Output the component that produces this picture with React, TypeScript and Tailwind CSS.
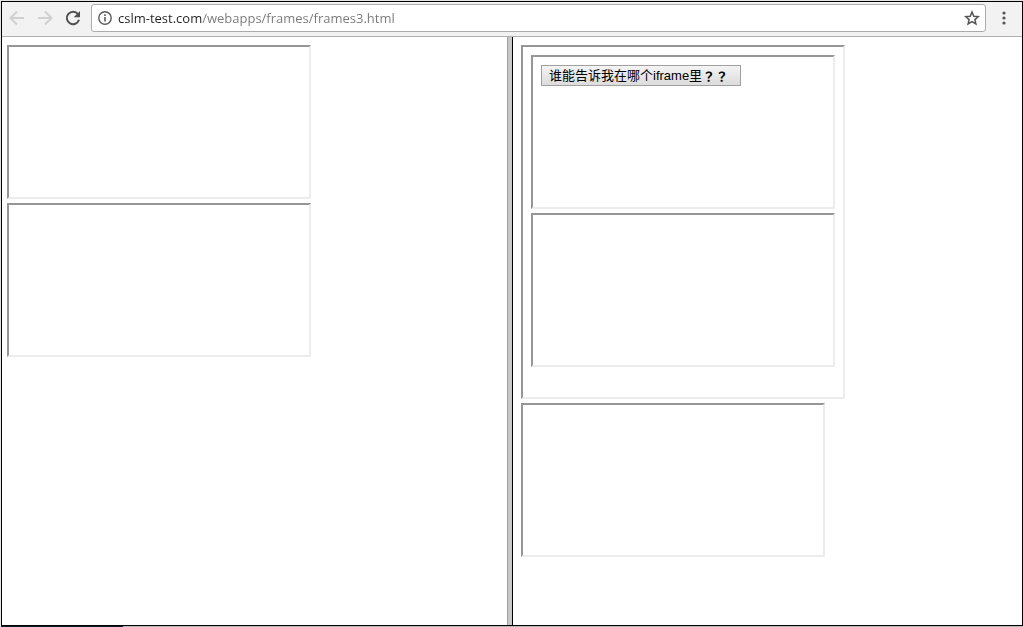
import type { ReactNode } from "react";

function Frame({ label, className = "", children }: { label: string; className?: string; children?: ReactNode }) {
  return (
    <section
      aria-label={label}
      className={`border-2 border-t-[#969696] border-l-[#969696] border-r-[#ececec] border-b-[#ececec] bg-white p-2 ${className}`}
    >
      {children}
    </section>
  );
}

function Toolbar() {
  return (
    <header className="flex h-[35px] shrink-0 items-start border-b border-[#b0b0b0] bg-[#f2f2f2] pt-0.5 pr-2.5 pl-[3px]">
      <nav className="flex h-7 items-center gap-1">
        <button type="button" aria-label="Back" disabled className="flex size-6 items-center justify-center">
          <svg viewBox="0 0 16 16" className="size-4" fill="none" stroke="#d0d0d0" strokeWidth="2">
            <path d="M15 8H2M8 1.5L1.5 8L8 14.5" />
          </svg>
        </button>
        <button type="button" aria-label="Forward" disabled className="flex size-6 items-center justify-center">
          <svg viewBox="0 0 16 16" className="size-4" fill="none" stroke="#d0d0d0" strokeWidth="2">
            <path d="M1 8H14M8 1.5L14.5 8L8 14.5" />
          </svg>
        </button>
        <button type="button" aria-label="Reload" className="flex size-6 items-center justify-center">
          <svg viewBox="0 0 16 16" className="size-4" fill="none">
            <path d="M13 4.2A6.2 6.2 0 1 0 14 9.8" stroke="#505050" strokeWidth="2" />
            <path d="M15 1V7.3H8.7Z" fill="#505050" />
          </svg>
        </button>
      </nav>
      <form
        className="ml-1.5 flex h-7 min-w-0 flex-1 items-center rounded-[3px] border border-[#ababab] bg-white pr-[5px] pl-1.5"
        onSubmit={(e) => e.preventDefault()}
      >
        <svg viewBox="0 0 14 14" className="size-3.5 shrink-0" fill="none" stroke="#5a5a5a">
          <circle cx="7" cy="7" r="6.2" strokeWidth="1.4" />
          <path d="M7 6V10.5M7 3.3V4.9" strokeWidth="1.6" />
        </svg>
        <input
          aria-label="Address"
          type="text"
          defaultValue="cslm-test.com/webapps/frames/frames3.html"
          className="ml-1.5 min-w-0 flex-1 bg-[linear-gradient(to_right,#222_84px,#777_84px)] bg-clip-text font-['Open_Sans','Noto_Sans',sans-serif] text-[13px] leading-5 text-transparent outline-none"
        />
        <button type="button" aria-label="Bookmark this page" className="flex size-4 items-center justify-center">
          <svg viewBox="0 0 16 16" className="size-4" fill="none" stroke="#555" strokeWidth="1.5">
            <path d="M8 2L9.8 6.2L14.3 6.6L10.9 9.6L11.9 14L8 11.7L4.1 14L5.1 9.6L1.7 6.6L6.2 6.2Z" />
          </svg>
        </button>
      </form>
      <button type="button" aria-label="Menu" className="ml-2.5 flex h-7 w-4 items-center justify-center">
        <svg viewBox="0 0 4 14" className="h-3.5 w-1" fill="#555">
          <circle cx="2" cy="2" r="1.6" />
          <circle cx="2" cy="7" r="1.6" />
          <circle cx="2" cy="12" r="1.6" />
        </svg>
      </button>
    </header>
  );
}

export default function App() {
  return (
    <div className="flex h-screen flex-col bg-[#e4e4e4] pt-px pl-px">
      <div className="flex min-h-0 flex-1 flex-col border border-black bg-white">
        <Toolbar />
        <main className="flex min-h-0 flex-1">
          <div className="flex min-w-0 flex-1 flex-col items-start gap-1 pt-2 pl-[5px]">
            <Frame label="Left frame 1" className="h-[154px] w-[304px]" />
            <Frame label="Left frame 2" className="h-[154px] w-[304px]" />
          </div>
          <div role="separator" aria-orientation="vertical" className="w-1.5 shrink-0 border-r border-l border-r-black border-l-[#a0a0a0] bg-[#c8c8c8]" />
          <div className="flex min-w-0 flex-1 flex-col items-start gap-1 pt-2 pr-px pl-2">
            <Frame label="Right frame 1" className="flex h-[354px] w-[324px] flex-col gap-1">
              <Frame label="Inner frame 1" className="flex h-[154px] items-start">
                <button
                  type="button"
                  className="flex h-[21px] w-[200px] items-center border border-[#a0a0a0] bg-linear-to-b from-[#f4f4f4] to-[#dcdcdc] pl-[7px] font-['Liberation_Sans','Noto_Sans_CJK_SC',sans-serif] text-[13px] leading-4 whitespace-nowrap text-black"
                >
                  谁能告诉我在哪个iframe里
                  <span className="font-['Noto_Sans_CJK_JP',sans-serif] font-bold">？？</span>
                </button>
              </Frame>
              <Frame label="Inner frame 2" className="h-[154px]" />
            </Frame>
            <Frame label="Right frame 2" className="h-[154px] w-[304px]" />
          </div>
        </main>
      </div>
      <footer className="flex h-px shrink-0 bg-[#b8b8b8]">
        <div className="w-[122px] bg-[#0a1a30]" />
      </footer>
    </div>
  );
}
